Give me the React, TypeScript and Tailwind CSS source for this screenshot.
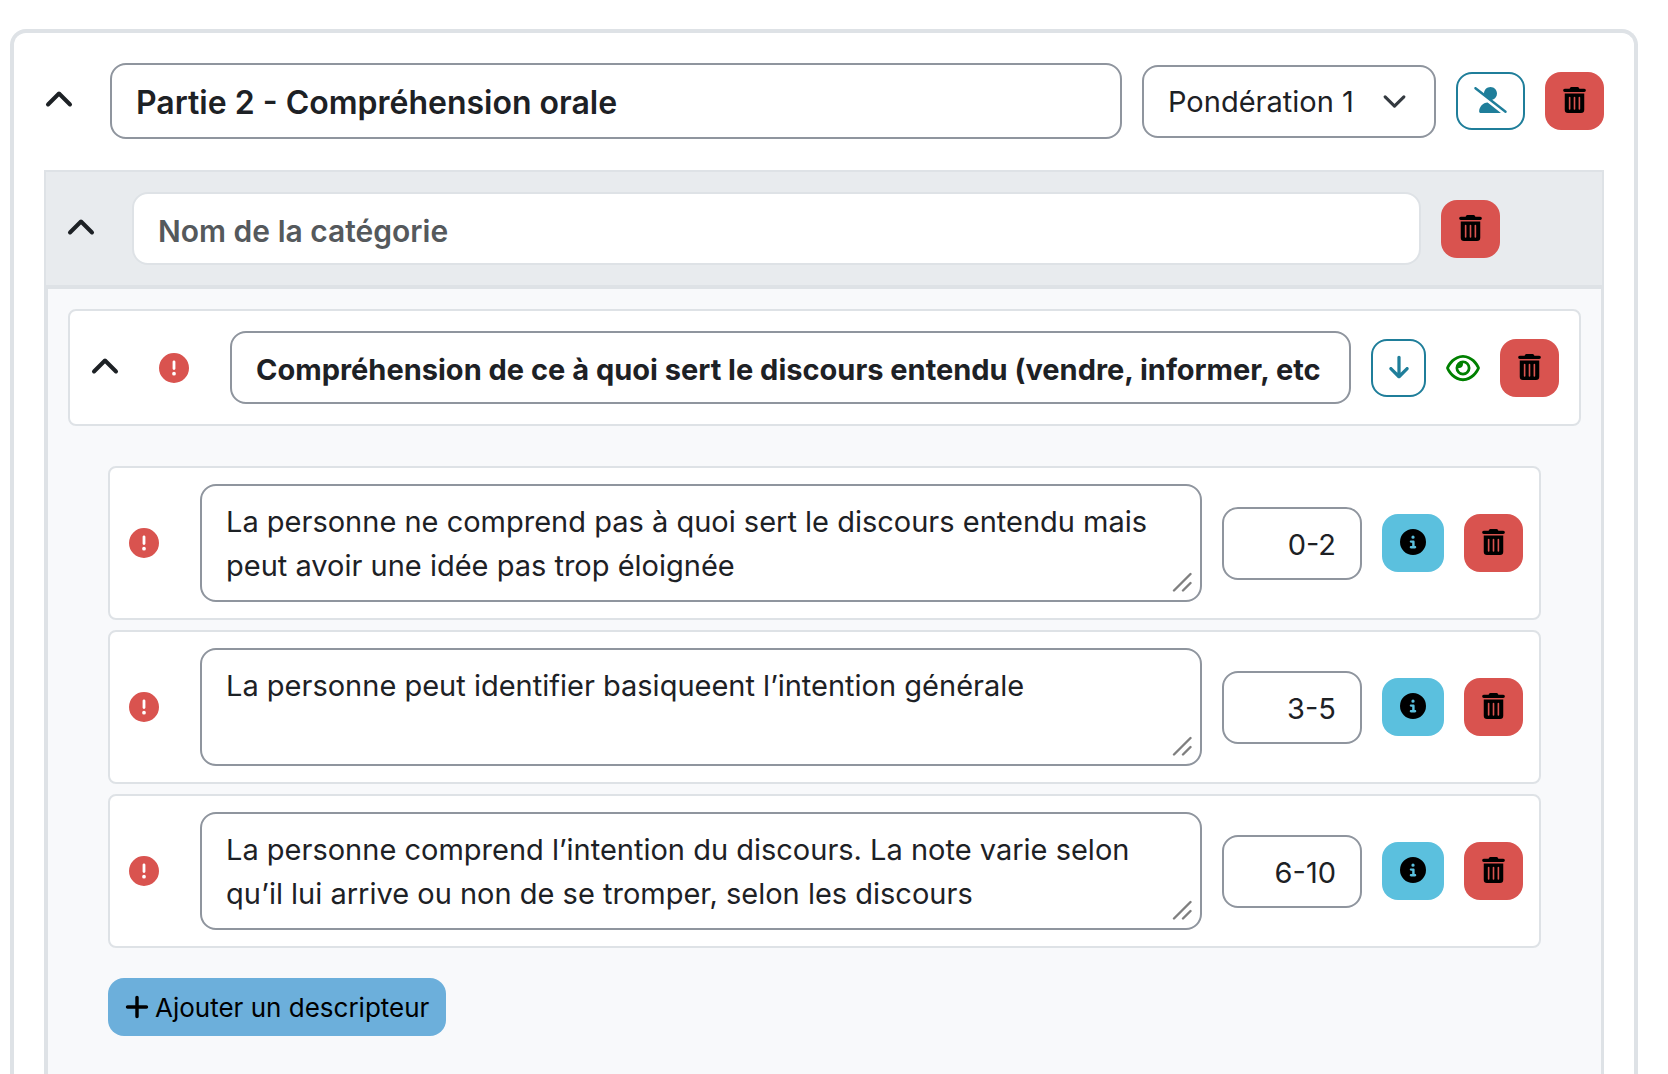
import React, { useState } from 'react';
import {
  FaArrowDown,
  FaCircleExclamation,
  FaCircleInfo,
  FaPlus,
  FaRegEye,
  FaUserSlash
} from 'react-icons/fa6';

type Descriptor = {
  id: number;
  text: string;
  points: string;
};

const initialDescriptors: Descriptor[] = [
  {
    id: 1,
    text: 'La personne ne comprend pas à quoi sert le discours entendu mais peut avoir une idée pas trop éloignée',
    points: '0-2'
  },
  {
    id: 2,
    text: 'La personne peut identifier basiqueent l’intention générale',
    points: '3-5'
  },
  {
    id: 3,
    text: 'La personne comprend l’intention du discours. La note varie selon qu’il lui arrive ou non de se tromper, selon les discours',
    points: '6-10'
  }
];

const CollapseButton = ({ label }: { label: string }) => (
  <button type="button" aria-label={label} className="mr-[34px] shrink-0">
    <svg
      viewBox="0 0 32 32"
      className="h-8 w-8"
      fill="none"
      stroke="currentColor"
      strokeWidth="4"
      strokeLinecap="round"
      strokeLinejoin="round"
    >
      <path d="M4 19.500 15 8.500l11 11" />
    </svg>
  </button>
);

const DeleteButton = ({ label, onClick }: { label: string; onClick?: () => void }) => (
  <button
    type="button"
    aria-label={label}
    onClick={onClick}
    className="flex h-[58px] w-[59px] shrink-0 items-center justify-center rounded-2xl bg-[#d9534f] pr-px pb-0.5 text-black"
  >
    <svg viewBox="0 0 448 512" className="h-[26px] w-[23px]" fill="currentColor">
      <path d="M135 18C140 7 152 0 164 0h120c12 0 23 7 29 18l7 14h96a32 32 0 0 1 0 64H32a32 32 0 0 1 0-64h96zM32 128h384v320a64 64 0 0 1-64 64H96a64 64 0 0 1-64-64zM112 208v224a16 16 0 0 0 32 0V208a16 16 0 0 0-32 0zM208 208v224a16 16 0 0 0 32 0V208a16 16 0 0 0-32 0zM304 208v224a16 16 0 0 0 32 0V208a16 16 0 0 0-32 0z" fillRule="evenodd" />
    </svg>
  </button>
);

const Warning = () => (
  <span className="mr-[38px] flex w-9 shrink-0 justify-center text-[#d9534f]">
    <FaCircleExclamation size={30} />
  </span>
);

const DescriptorRow = ({ item, onDelete }: { item: Descriptor; onDelete: () => void }) => (
  <li className="flex items-center rounded-lg border-2 border-[#dee2e6] bg-white p-4">
    <Warning />
    <div className="relative min-w-0 flex-1">
      <textarea
        aria-label={`Descripteur ${item.id}`}
        defaultValue={item.text}
        rows={2}
        className="block h-[118px] w-full resize-none overflow-hidden rounded-2xl border-2 border-[#8f959e] bg-white px-6 pt-[14px] pb-3 text-[29px] leading-[44px]"
      />
      {/* Resize grip */}
      <svg
        viewBox="0 0 20 20"
        className="pointer-events-none absolute right-2.5 bottom-2.5 h-5 w-5"
        fill="none"
        stroke="#7f7f7f"
        strokeWidth="2.4"
        strokeLinecap="round"
      >
        <path d="M2 18.500 18.500 2M11 18.500l7.500-7.500" />
      </svg>
    </div>
    <input
      type="text"
      aria-label={`Points du descripteur ${item.id}`}
      defaultValue={item.points}
      className="ml-5 h-[73px] w-[140px] shrink-0 rounded-2xl border-2 border-[#8f959e] bg-white px-6 pt-0.5 text-right text-[29px]"
    />
    <button
      type="button"
      aria-label="Information"
      className="mx-5 flex h-[58px] w-[62px] shrink-0 items-center justify-center rounded-2xl bg-[#5bc0de] pb-0.5 text-black"
    >
      <FaCircleInfo size={26} />
    </button>
    <DeleteButton label="Supprimer le descripteur" onClick={onDelete} />
  </li>
);

const App = () => {
  const [descriptors, setDescriptors] = useState(initialDescriptors);

  const removeDescriptor = (id: number) => {
    setDescriptors(descriptors.filter((d) => d.id !== id));
  };

  const addDescriptor = () => {
    setDescriptors([...descriptors, { id: Date.now(), text: '', points: '' }]);
  };

  return (
    <main className="flex min-h-screen flex-col bg-white pt-[29px] pr-[30px] pl-2.5 font-['Inter',sans-serif] text-[#1d2125]">
      <section className="flex grow flex-col rounded-t-2xl border-4 border-b-0 border-[#dee2e6] px-[30px] pt-[30px]">
        {/* Part header */}
        <div className="mb-[31px] flex items-center">
          <CollapseButton label="Replier la partie" />
          <input
            type="text"
            aria-label="Nom de la partie"
            defaultValue="Partie 2 - Compréhension orale"
            className="h-[76px] min-w-0 flex-1 rounded-2xl border-2 border-[#8f959e] bg-white px-6 pt-0.5 text-[32px] font-semibold"
          />
          <div className="relative ml-5 shrink-0">
            <select
              aria-label="Pondération"
              className="h-[73px] w-[294px] appearance-none rounded-2xl border-2 border-[#8f959e] bg-white pt-0.5 pr-16 pl-6 text-[29px]"
            >
              <option>Pondération 1</option>
              <option>Pondération 2</option>
              <option>Pondération 3</option>
            </select>
            <svg
              viewBox="0 0 16 16"
              className="pointer-events-none absolute top-6 right-[29px] h-[25px] w-[25px]"
              fill="none"
              stroke="#343a40"
              strokeWidth="2"
              strokeLinecap="round"
              strokeLinejoin="round"
            >
              <path d="m2 5 6 6 6-6" />
            </svg>
          </div>
          <button
            type="button"
            aria-label="Masquer pour les participants"
            className="mx-5 flex h-[58px] w-[69px] shrink-0 items-center justify-center rounded-2xl border-2 border-[#1f7e9a] bg-white pb-0.5 text-[#1f7e9a]"
          >
            <FaUserSlash className="h-[26px] w-[33px]" />
          </button>
          <DeleteButton label="Supprimer la partie" />
        </div>

        {/* Category */}
        <div className="flex items-center border-2 border-b-0 border-[#dee2e6] bg-[#e8ebee] py-5 pr-[102px] pl-5">
          <CollapseButton label="Replier la catégorie" />
          <input
            type="text"
            aria-label="Nom de la catégorie"
            placeholder="Nom de la catégorie"
            className="mr-5 h-[73px] min-w-0 flex-1 rounded-2xl border-2 border-[#dee2e6] bg-white px-6 pt-1 text-[30px] font-semibold placeholder:text-[#55595c]"
          />
          <DeleteButton label="Supprimer la catégorie" />
        </div>

        <div className="grow border-4 border-r-3 border-b-0 border-[#dee2e6] bg-[#f8f9fb] px-5 pt-5">
          {/* Criterion */}
          <div className="flex items-center rounded-lg border-2 border-[#dee2e6] bg-white p-5">
            <CollapseButton label="Replier le critère" />
            <Warning />
            <input
              type="text"
              aria-label="Nom du critère"
              defaultValue="Compréhension de ce à quoi sert le discours entendu (vendre, informer, etc"
              className="h-[73px] min-w-0 flex-1 rounded-2xl border-2 border-[#8f959e] bg-white px-6 pt-1 text-[29px] font-bold"
            />
            <button
              type="button"
              aria-label="Descendre le critère"
              className="mx-5 flex h-[58px] w-[55px] shrink-0 items-center justify-center rounded-2xl border-2 border-[#1f7e9a] bg-white pb-0.5 text-[#1f7e9a]"
            >
              <FaArrowDown size={26} />
            </button>
            <button type="button" aria-label="Visibilité" className="mr-5 w-[34px] shrink-0 text-[#008000]">
              <FaRegEye size={30} className="w-full" />
            </button>
            <DeleteButton label="Supprimer le critère" />
          </div>

          <div className="px-10 pt-10 pb-9">
            <ul className="space-y-2.5">
              {descriptors.map((item) => (
                <DescriptorRow key={item.id} item={item} onDelete={() => removeDescriptor(item.id)} />
              ))}
            </ul>
            <button
              type="button"
              onClick={addDescriptor}
              className="mt-[30px] flex h-[58px] items-center gap-1.5 rounded-2xl bg-[#6cafdb] px-[17px] text-[26px] text-black"
            >
              <FaPlus size={28} className="w-6" />
              Ajouter un descripteur
            </button>
          </div>
        </div>
      </section>
    </main>
  );
};

export default App;
